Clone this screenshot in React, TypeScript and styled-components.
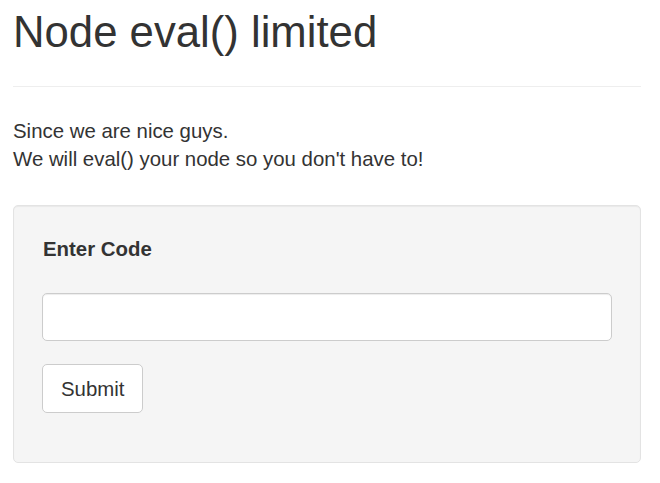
import styled, { createGlobalStyle } from 'styled-components'

const GlobalStyle = createGlobalStyle`
    html, body {
        margin: 0;
        padding: 0;
        background: #fff;
    }
    body {
        font-family: "Liberation Sans", Arial, Helvetica, sans-serif;
        font-size: 20.4px;
        line-height: 28px;
        color: #333;
    }
    * {
        box-sizing: border-box;
    }
`

export default function App() {
    return (
        <>
            <GlobalStyle />
            <Container>
                <PageHeader>
                    <Title>Node eval() limited</Title>
                </PageHeader>
                <Intro>
                    Since we are nice guys.
                    <br />
                    We will eval() your node so you don't have to!
                </Intro>
                <Well>
                    <form onSubmit={(e) => e.preventDefault()}>
                        <FormGroup>
                            <Label htmlFor="code">Enter Code</Label>
                            <Input id="code" type="text" />
                        </FormGroup>
                        <Button type="submit">Submit</Button>
                    </form>
                </Well>
            </Container>
        </>
    )
}

const Container = styled.div`
    padding: 8px 19px 0 13px;
    width: 660px;
`

const PageHeader = styled.div`
    padding-bottom: 30px;
    border-bottom: 1px solid #eee;
`

const Title = styled.h1`
    margin: 0;
    font-size: 43.7px;
    line-height: 48px;
    font-weight: 400;
    color: #333;
`

const Intro = styled.p`
    margin: 30px 0 32px 0;
`

const Well = styled.div`
    background-color: #f5f5f5;
    border: 1px solid #e3e3e3;
    border-radius: 5px;
    box-shadow: inset 0 1px 1px rgba(0, 0, 0, 0.05);
    padding: 29px 28px 49px 28px;
`

const FormGroup = styled.div`
    display: flex;
    flex-direction: column;
    gap: 30px;
    margin-bottom: 23px;
`

const Label = styled.label`
    padding-left: 1px;
    font-weight: 700;
`

const Input = styled.input`
    display: block;
    width: 100%;
    height: 48px;
    padding: 8px 16px;
    font-family: inherit;
    font-size: 20px;
    color: #555;
    background: #fff;
    border: 1px solid #ccc;
    border-radius: 5px;
    box-shadow: inset 0 1px 1px rgba(0, 0, 0, 0.075);
    outline: none;
`

const Button = styled.button`
    display: block;
    height: 49px;
    padding: 0 18px;
    font-family: inherit;
    font-size: 20.4px;
    line-height: 28px;
    color: #333;
    background: #fff;
    border: 1px solid #ccc;
    border-radius: 5px;
    cursor: pointer;
`
